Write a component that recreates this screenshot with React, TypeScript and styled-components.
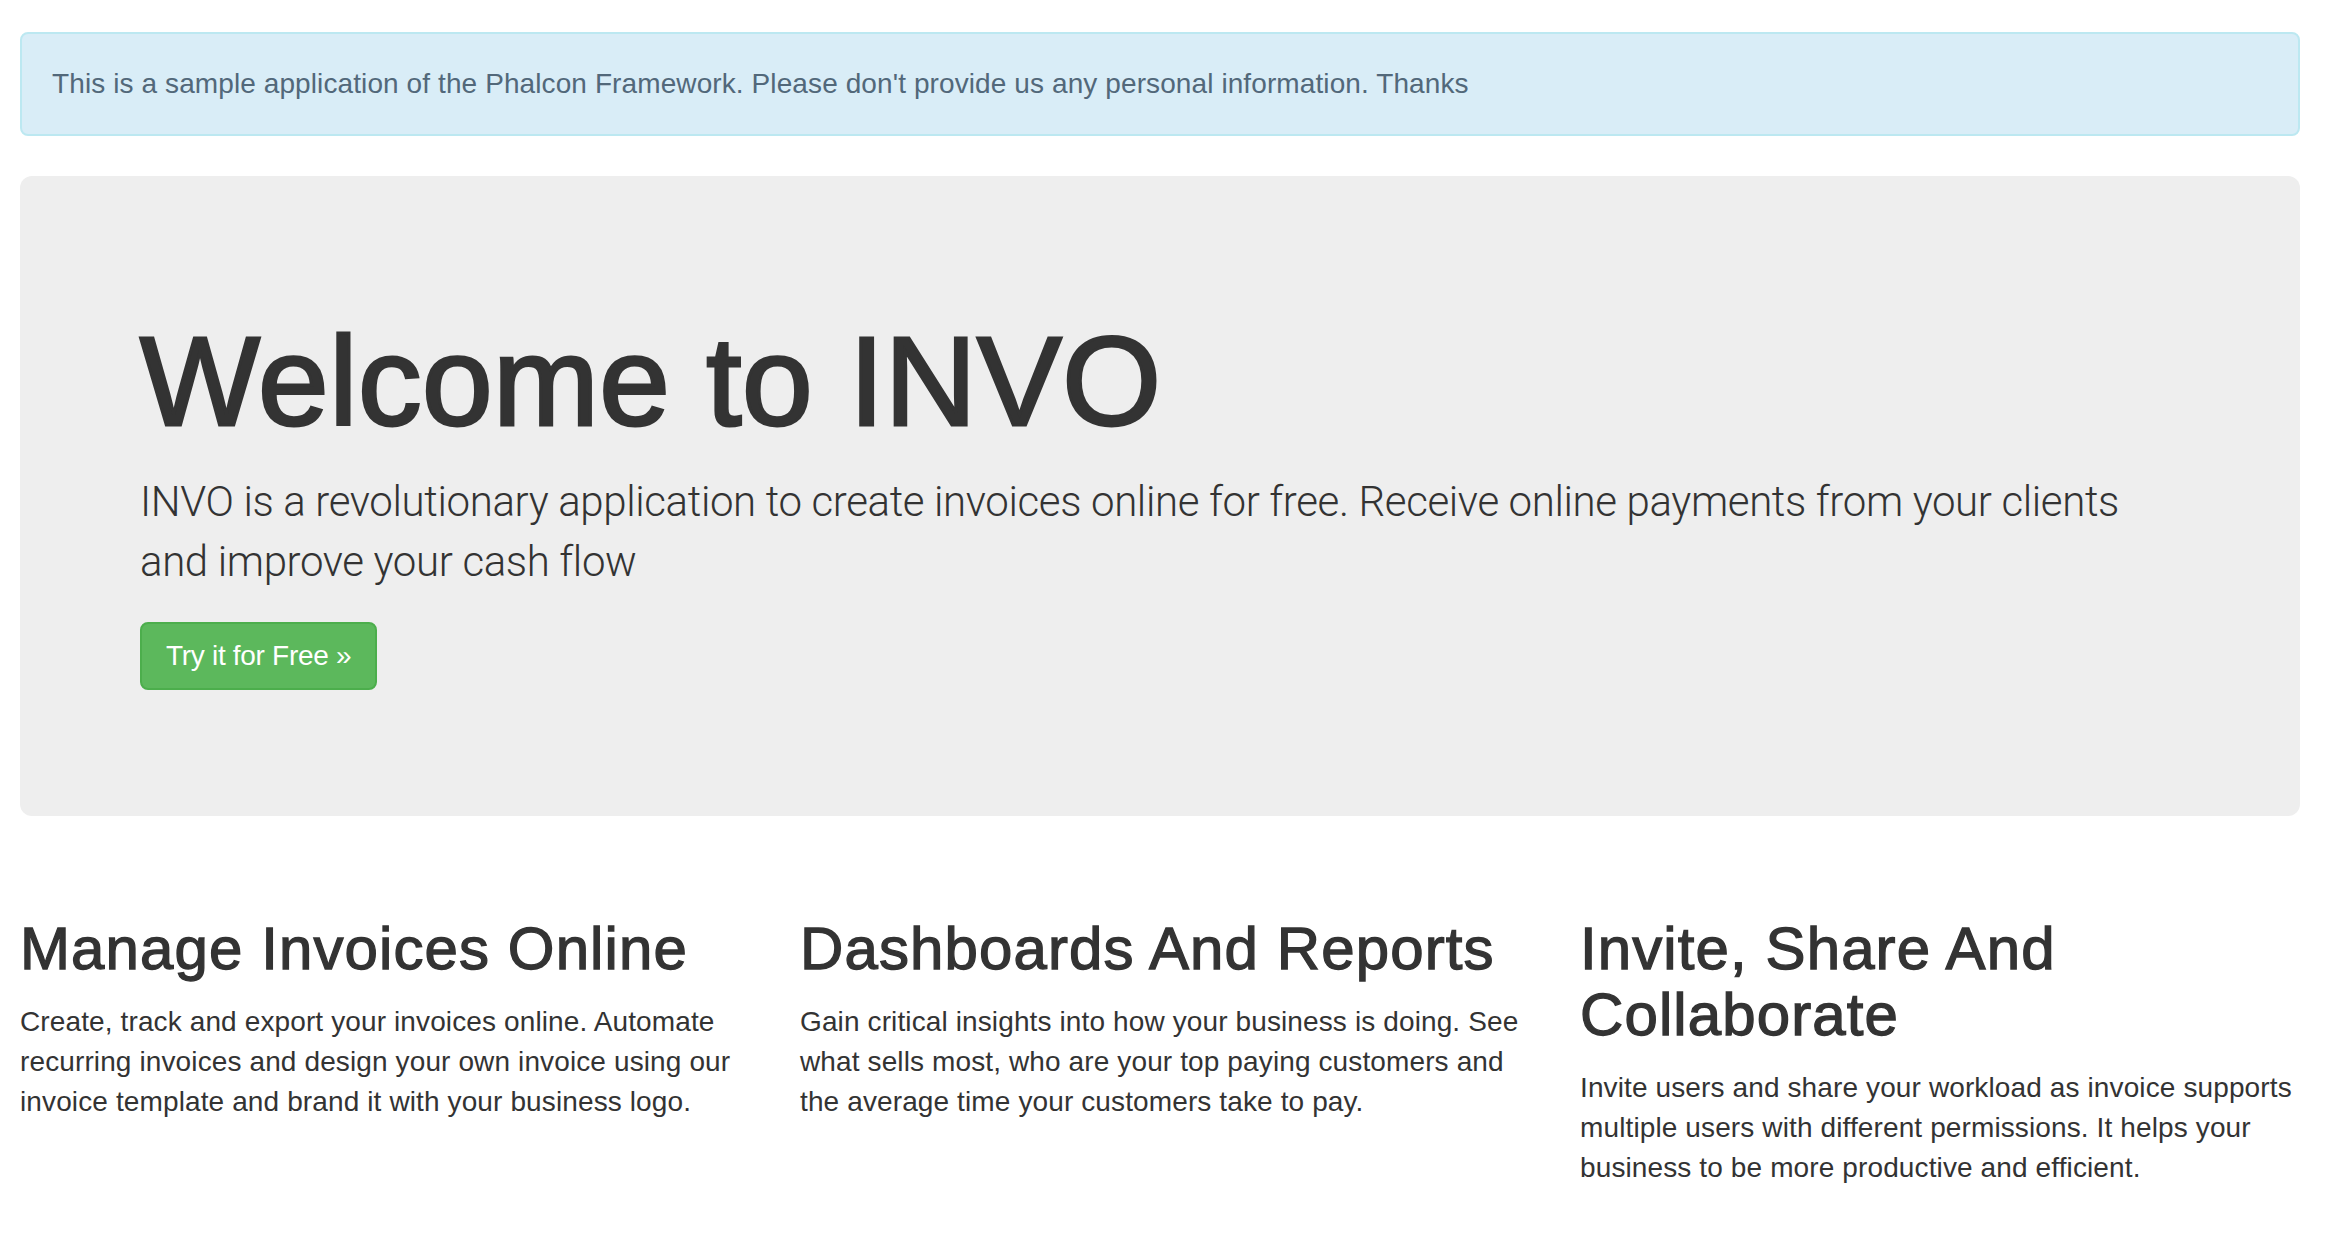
import React from "react";
import styled, { createGlobalStyle } from "styled-components";

const GlobalStyle = createGlobalStyle`
  html, body {
    margin: 0;
    padding: 0;
    background: #fff;
  }
  body {
    font-family: "Liberation Sans", Arial, Helvetica, sans-serif;
    font-size: 28px;
    line-height: 40px;
    color: #333;
  }
  * { box-sizing: border-box; }
`;

const Page = styled.div`
  padding: 32px 34px 40px 20px;
`;

const Alert = styled.div`
  background: #d9edf7;
  border: 2px solid #bce8f1;
  border-radius: 8px;
  color: #52687a;
  padding: 30px 30px;
  font-size: 28px;
  line-height: 40px;
  letter-spacing: 0.1px;
  margin-bottom: 40px;
`;

const Jumbotron = styled.section`
  background: #eeeeee;
  border-radius: 12px;
  padding: 96px 120px;
  margin-bottom: 60px;
`;

const Title = styled.h1`
  margin: 40px 0 20px;
  font-size: 127px;
  line-height: 1.1;
  font-weight: 500;
  color: #333;
  letter-spacing: 0.5px;
  -webkit-text-stroke: 3px #333;
`;

const Lead = styled.p`
  margin: 0 0 30px;
  font-family: "Roboto", "Liberation Sans", Arial, sans-serif;
  font-weight: 300;
  font-size: 42px;
  line-height: 60px;
  letter-spacing: -0.37px;
  color: #333;
`;

const ButtonRow = styled.p`
  margin: 0 0 30px;
`;

const SuccessButton = styled.a`
  display: inline-block;
  background: #5cb85c;
  border: 2px solid #4cae4c;
  border-radius: 8px;
  color: #fff;
  font-size: 28px;
  line-height: 40px;
  padding: 12px 24px;
  letter-spacing: -0.3px;
  text-decoration: none;
  cursor: pointer;
`;

const Features = styled.div`
  display: grid;
  grid-template-columns: repeat(3, 1fr);
  margin: 0 -30px;
`;

const Feature = styled.div`
  padding: 0 30px;
`;

const FeatureTitle = styled.h2`
  margin: 40px 0 20px;
  font-size: 60px;
  line-height: 66px;
  font-weight: 500;
  color: #333;
  letter-spacing: 1.1px;
  -webkit-text-stroke: 1.3px #333;
`;

const FeatureText = styled.p`
  margin: 0 0 20px;
  font-size: 28px;
  line-height: 40px;
  letter-spacing: 0.12px;
`;

const features = [
  {
    title: "Manage Invoices Online",
    text: "Create, track and export your invoices online. Automate recurring invoices and design your own invoice using our invoice template and brand it with your business logo.",
  },
  {
    title: "Dashboards And Reports",
    text: "Gain critical insights into how your business is doing. See what sells most, who are your top paying customers and the average time your customers take to pay.",
  },
  {
    title: "Invite, Share And Collaborate",
    text: "Invite users and share your workload as invoice supports multiple users with different permissions. It helps your business to be more productive and efficient.",
  },
];

export default function App() {
  return (
    <>
      <GlobalStyle />
      <Page>
        <Alert>
          This is a sample application of the Phalcon Framework. Please don't provide us any personal information. Thanks
        </Alert>
        <Jumbotron>
          <Title>Welcome to INVO</Title>
          <Lead>
            INVO is a revolutionary application to create invoices online for free. Receive online payments from your clients and improve your cash flow
          </Lead>
          <ButtonRow>
            <SuccessButton>Try it for Free »</SuccessButton>
          </ButtonRow>
        </Jumbotron>
        <Features>
          {features.map((f) => (
            <Feature key={f.title}>
              <FeatureTitle>{f.title}</FeatureTitle>
              <FeatureText>{f.text}</FeatureText>
            </Feature>
          ))}
        </Features>
      </Page>
    </>
  );
}
